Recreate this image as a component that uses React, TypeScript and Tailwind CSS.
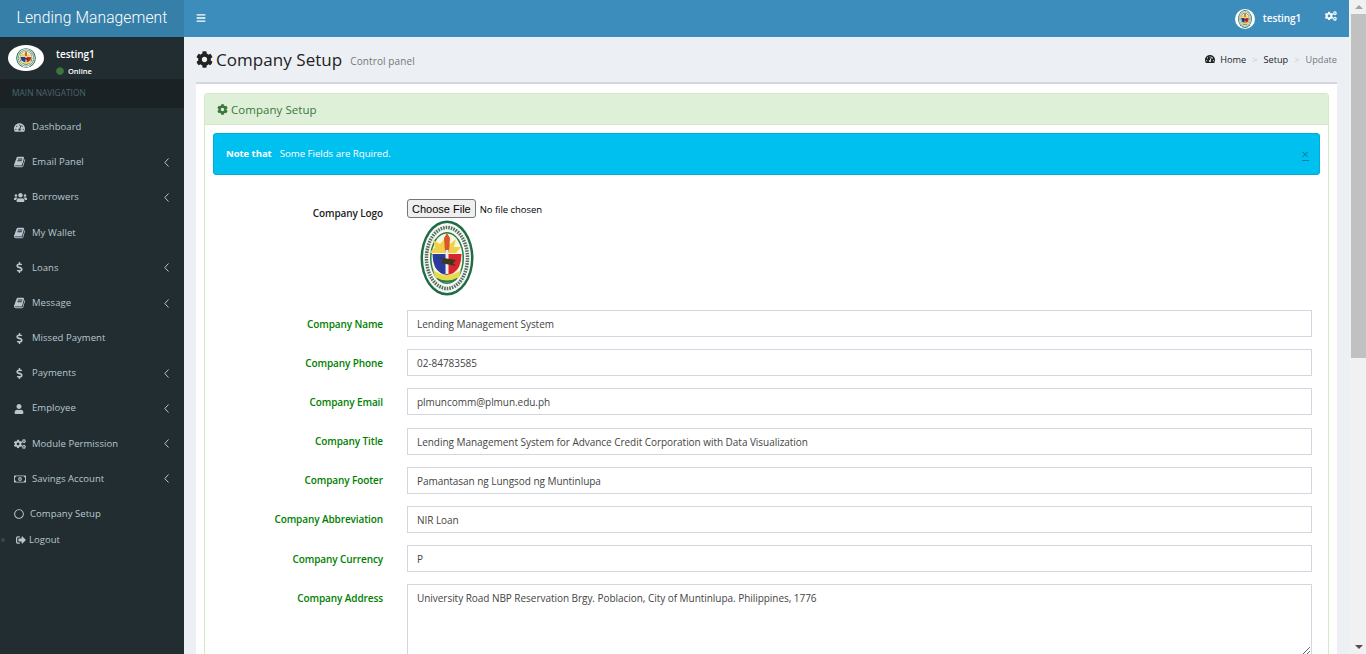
import React from "react";
import {
  FaTachometerAlt, FaUsers, FaDollarSign, FaUser, FaCogs, FaRegMoneyBillAlt, FaRegCircle, FaSignOutAlt, FaBars, FaCog, FaCircle,
} from "react-icons/fa";

function Seal({ className }: { className?: string }) {
  return (
    <svg viewBox="0 0 54 76" preserveAspectRatio="none" className={className} aria-hidden="true">
      <ellipse cx="27" cy="38" rx="26.5" ry="37.5" fill="#1f6b45" />
      <ellipse cx="27" cy="38" rx="24" ry="35" fill="#f6f7f3" />
      <ellipse cx="27" cy="38" rx="20.5" ry="30.5" fill="none" stroke="#55705f" strokeWidth="3.5" strokeDasharray="1.6 1" />
      <ellipse cx="27" cy="38" rx="17" ry="26" fill="#1f7a4c" />
      <ellipse cx="27" cy="38" rx="15.5" ry="24.5" fill="#faf6e0" />
      <path d="M27 16l3 8 6-5-2 8 7 0-5 6H14l-5 0 6-6-2-7 7 4z" fill="#f0d24a" />
      <path d="M12.5 34H27v21q-8-1-12-8-2.500-6-2.500-13z" fill="#2b3a9e" />
      <path d="M27 34h14.500q0 7-2.500 13-4 7-12 8z" fill="#d9262c" />
      <path d="M24 18l3-5 3 5-1 14h-4z" fill="#d9572a" />
      <path d="M25.500 30h3v24h-3z" fill="#ececec" />
      <path d="M17 37l19 3-3 3 3 3-15-3 2-3z" fill="#3b3a1e" />
      <path d="M13 50q14 10 28 0l-2 7q-12 8-24 0z" fill="#e7db4d" />
      <path d="M17 58q10 5 20 0l-1 2q-9 5-18 0z" fill="#2a7a4c" />
    </svg>
  );
}

function Book({ className }: { className?: string }) {
  return (
    <svg viewBox="0 0 1792 1792" fill="currentColor" className={className} aria-hidden="true">
      <path d="M1639 478q40 57 18 129l-275 906q-19 64-76.500 107.500t-122.500 43.500h-923q-77 0-148.500-53.500t-99.500-131.500q-24-67-2-127 0-4 3-27t4-37q1-8-3-21.500t-3-19.500q2-11 8-21t16.500-23.500 16.500-23.500q23-38 45-91.500t30-91.500q3-10 .5-30t-.5-28q3-11 17-28t17-23q21-36 42-92t25-90q1-9-2.500-32t.5-28q4-13 22-30.500t22-22.500q19-26 42.500-84.500t27.500-96.500q1-8-3-25.500t-2-26.500q2-8 9-18t18-23 17-21q8-12 16.500-30.500t15-35 16-36 19.500-32 26.500-23.500 36-11.500 47.500 5.500l-1 3q38-9 51-9h761q74 0 114 56t18 130l-274 906q-36 119-71.500 153.500t-128.500 34.500h-869q-27 0-38 15-11 16-1 43 24 70 144 70h923q29 0 56-15.500t35-41.500l300-987q7-22 5-57 38 15 59 43zm-1064 2q-4 13 2 22.500t20 9.500h608q13 0 25.500-9.500t16.500-22.500l21-64q4-13-2-22.500t-20-9.500h-608q-13 0-25.500 9.500t-16.500 22.500zm-83 256q-4 13 2 22.500t20 9.500h608q13 0 25.500-9.500t16.500-22.500l21-64q4-13-2-22.500t-20-9.500h-608q-13 0-25.500 9.500t-16.500 22.500z" />
    </svg>
  );
}

function Chevron() {
  return (
    <svg viewBox="0 0 5 9" className="ml-auto h-[9px] w-[5px]" fill="none" stroke="currentColor" strokeWidth="1" aria-hidden="true">
      <path d="M4.500 0.500L0.800 4.500l3.700 4" />
    </svg>
  );
}

const nav: { icon: React.ComponentType<{ className?: string }>; size: string; label: string; arrow?: boolean }[] = [
  { icon: FaTachometerAlt, size: "text-[11px]", label: "Dashboard" },
  { icon: Book, size: "h-[12px] w-[12px]", label: "Email Panel", arrow: true },
  { icon: FaUsers, size: "text-[13px]", label: "Borrowers", arrow: true },
  { icon: Book, size: "h-[12px] w-[12px]", label: "My Wallet" },
  { icon: FaDollarSign, size: "text-[11px]", label: "Loans", arrow: true },
  { icon: Book, size: "h-[12px] w-[12px]", label: "Message", arrow: true },
  { icon: FaDollarSign, size: "text-[11px]", label: "Missed Payment" },
  { icon: FaDollarSign, size: "text-[11px]", label: "Payments", arrow: true },
  { icon: FaUser, size: "text-[10px]", label: "Employee", arrow: true },
  { icon: FaCogs, size: "text-[12px]", label: "Module Permission", arrow: true },
  { icon: FaRegMoneyBillAlt, size: "text-[12px]", label: "Savings Account", arrow: true },
];

const fields = [
  ["Company Name", "Lending Management System"],
  ["Company Phone", "02-84783585"],
  ["Company Email", "plmuncomm@plmun.edu.ph"],
  ["Company Title", "Lending Management System for Advance Credit Corporation with Data Visualization"],
  ["Company Footer", "Pamantasan ng Lungsod ng Muntinlupa"],
  ["Company Abbreviation", "NIR Loan"],
  ["Company Currency", "P"],
];

export default function App() {
  return (
    <div className="flex h-[654px] w-[1366px] overflow-hidden bg-white font-['Open_Sans',sans-serif] text-[10px] tracking-[-0.04px]">
      <div className="flex w-[1349px] shrink-0 flex-col">
        <header className="flex h-[37px] shrink-0 bg-[#3c8dbc] text-white">
          <div className="flex w-[184px] shrink-0 items-center justify-center bg-[#367fa9] font-['Roboto',sans-serif] text-[15.6px] font-light tracking-[0.1px]">
            Lending Management
          </div>
          <div className="flex flex-1 items-center pl-[12px]">
            <FaBars className="mb-[2px] text-[10px]" />
            <div className="ml-auto flex items-center">
              <div className="flex h-[20px] w-[20px] items-center justify-center rounded-full bg-white">
                <Seal className="h-[18px] w-[14px]" />
              </div>
              <span className="ml-[8px] text-[10px] font-semibold tracking-[-0.1px]">testing1</span>
              <FaCogs className="mb-[5px] ml-[24px] mr-[12px] text-[12px]" />
            </div>
          </div>
        </header>
        <div className="flex min-h-0 flex-1">
          <aside className="flex w-[184px] shrink-0 flex-col bg-[#222d32]">
            <div className="flex h-[42px] items-center pl-[8px]">
              <div className="flex h-[26px] w-[36px] items-center justify-center rounded-[50%] bg-white">
                <Seal className="h-[20px] w-[20px]" />
              </div>
              <div className="ml-[12px] mt-[7px] text-white">
                <div className="text-[10px] font-semibold leading-[14px]">testing1</div>
                <div className="mt-[5px] flex items-center text-[7.5px] font-semibold leading-[10px]">
                  <FaCircle className="mr-[4px] text-[8px] text-[#3c763d]" />
                  Online
                </div>
              </div>
            </div>
            <div className="flex h-[29px] items-center bg-[#1a2226] pl-[12px] text-[8.4px] tracking-normal text-[#4b646f]">MAIN NAVIGATION</div>
            <nav className="flex flex-col pt-[1.5px] text-[#b8c7ce]">
              {nav.map(({ icon: Icon, size, label, arrow }) => (
                <div key={label} className="flex h-[35.2px] items-center pl-[14px] pr-[15px]">
                  <span className="flex w-[18px] shrink-0 justify-start">
                    <Icon className={size} />
                  </span>
                  <span className="text-[9.5px] tracking-[0.05px]">{label}</span>
                  {arrow && <Chevron />}
                </div>
              ))}
              <div className="flex h-[35.2px] items-center pl-[14px]">
                <FaRegCircle className="mr-[6px] text-[10px]" />
                <span className="text-[9.5px] tracking-[0.05px]">Company Setup</span>
              </div>
              <div className="flex h-[16px] items-center pl-[1px]">
                <span className="mr-[11px] h-[4px] w-[4px] rounded-full bg-[#3a4549]" />
                <FaSignOutAlt className="mr-[3px] text-[10px]" />
                <span className="text-[9.5px] tracking-[0.05px]">Logout</span>
              </div>
            </nav>
          </aside>
          <main className="min-w-0 flex-1 bg-[#ecf0f5] pl-[12px] pr-[12px]">
            <div className="flex h-[45px] items-center text-[#222]">
              <FaCog className="mr-[3px] text-[17px]" />
              <h1 className="text-[17px] font-normal leading-none tracking-[0.05px]">Company Setup</h1>
              <span className="ml-[8px] mt-[3px] text-[10px] tracking-[0.1px] text-[#777]">Control panel</span>
              <div className="ml-auto flex items-center text-[9.2px] tracking-normal">
                <FaTachometerAlt className="mr-[5px] text-[10px]" />
                <span>Home</span>
                <span className="mx-[6px] text-[#ccc]">&gt;</span>
                <span>Setup</span>
                <span className="mx-[6px] text-[#ccc]">&gt;</span>
                <span className="text-[#777]">Update</span>
              </div>
            </div>
            <section className="h-[600px] border-t-[2px] border-[#d2d6de] bg-white px-[8px] pt-[9px]">
              <div className="h-full rounded-t-[3px] border border-[#d6e9c6]">
                <div className="flex h-[31px] items-center border-b border-[#d6e9c6] bg-[#dff0d8] pl-[12px] pt-[1px] text-[#3c763d]">
                  <FaCog className="mr-[3px] text-[11px]" />
                  <span className="text-[11.5px] tracking-[0.05px]">Company Setup</span>
                </div>
                <div className="px-[8px] pt-[8px]">
                  <div className="flex h-[42px] items-center rounded-[3px] border border-[#00acd6] bg-[#00c0ef] pl-[12px] pr-[10px] pt-[1px] text-white">
                    <b className="text-[9.5px] font-bold">Note that</b>
                    <span className="ml-[8px] text-[9.7px]">Some Fields are Rquired.</span>
                    <span className="ml-auto border-b border-[#0a7f9c] text-[13px] leading-[12px] text-[#0a7f9c]">×</span>
                  </div>
                  <div className="mt-[24px] flex items-start">
                    <div className="w-[170px] shrink-0 pt-[7px] text-right font-semibold tracking-[-0.1px] text-[#222]">Company Logo</div>
                    <div className="ml-[24px]">
                      <input
                        type="file"
                        className="block h-[19px] text-[9.5px] text-black file:mr-[4px] file:h-[19px] file:rounded-[3px] file:border file:border-[#767676] file:bg-[#efefef] file:px-[4px] file:pt-[1px] file:font-['Liberation_Sans',sans-serif] file:text-[11px] file:tracking-normal"
                      />
                      <Seal className="ml-[13px] mt-[2px] h-[76px] w-[54px] blur-[0.4px]" />
                    </div>
                  </div>
                  <div className="mt-[14px] flex flex-col gap-[12.2px]">
                    {fields.map(([label, value]) => (
                      <div key={label} className="flex items-center">
                        <label className="mt-[1px] w-[170px] shrink-0 text-right font-semibold tracking-[-0.1px] text-[#008000]">{label}</label>
                        <input
                          readOnly
                          value={value}
                          className="ml-[24px] h-[27px] w-[905px] border border-[#d2d6de] px-[9px] pt-[1px] text-[#444] outline-none"
                        />
                      </div>
                    ))}
                    <div className="flex items-start">
                      <label className="w-[170px] shrink-0 pt-[7px] text-right font-semibold tracking-[-0.1px] text-[#008000]">Company Address</label>
                      <textarea
                        readOnly
                        value="University Road NBP Reservation Brgy. Poblacion, City of Muntinlupa. Philippines, 1776"
                        className="ml-[24px] h-[72px] w-[905px] border border-[#d2d6de] px-[9px] py-[6px] text-[#444] outline-none"
                      />
                    </div>
                  </div>
                </div>
              </div>
            </section>
          </main>
        </div>
      </div>
      <div className="flex w-[17px] shrink-0 flex-col bg-[#f1f1f1] pl-[2px]">
        <div className="flex h-[14px] items-center justify-center">
          <svg viewBox="0 0 8 4" className="h-[4px] w-[8px]"><path d="M4 0l4 4H0z" fill="#a3a3a3" /></svg>
        </div>
        <div className="h-[344px] bg-[#c1c1c1]" />
        <div className="mt-auto flex h-[14px] items-center justify-center">
          <svg viewBox="0 0 8 4" className="h-[4px] w-[8px]"><path d="M0 0h8L4 4z" fill="#505050" /></svg>
        </div>
      </div>
    </div>
  );
}
